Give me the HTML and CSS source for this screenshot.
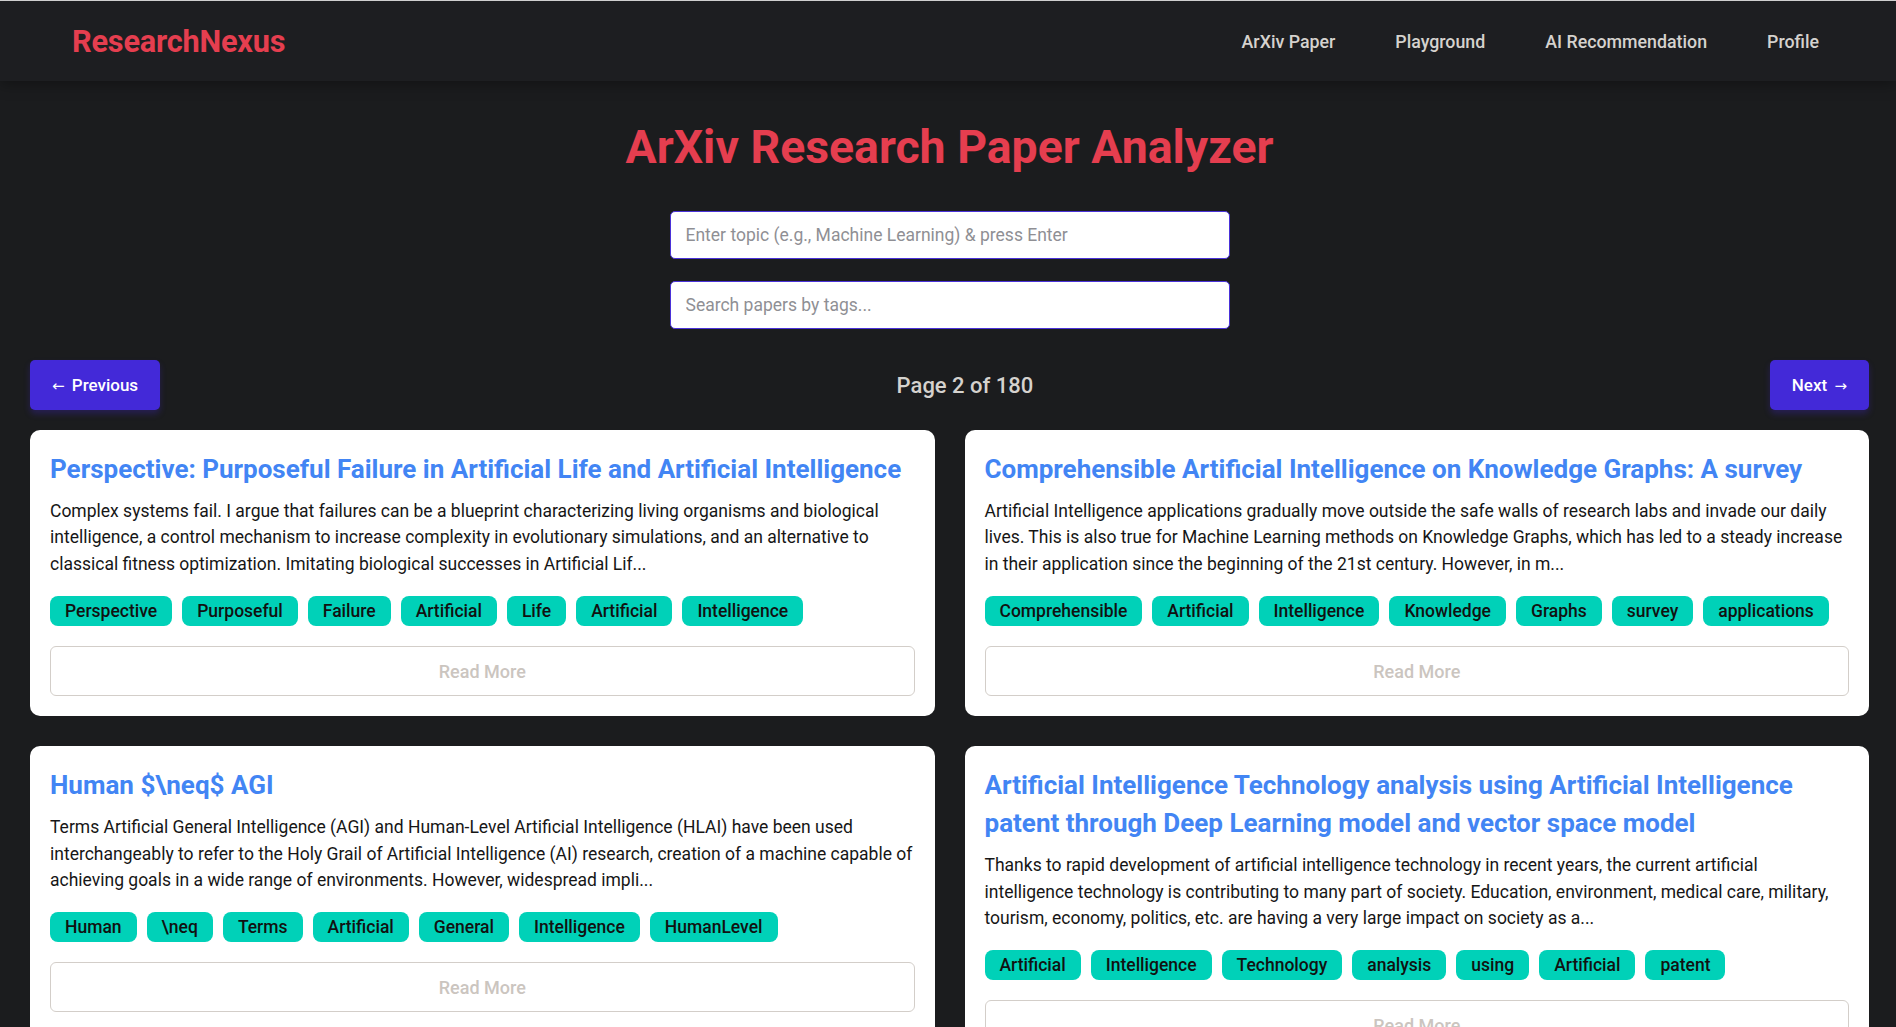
FILE: index.html
```html
<!DOCTYPE html>
<html lang="en">
<head>
<meta charset="utf-8">
<title>ResearchNexus</title>
<link rel="stylesheet" href="styles.css">
</head>
<body>
<nav class="navbar">
  <a class="brand" href="#">ResearchNexus</a>
  <div class="nav-links">
    <a href="#">ArXiv Paper</a>
    <a href="#">Playground</a>
    <a href="#">AI Recommendation</a>
    <a href="#">Profile</a>
  </div>
</nav>

<main class="page">
  <h1 class="page-title">ArXiv Research Paper Analyzer</h1>

  <div class="search">
    <input class="search-input" type="text" placeholder="Enter topic (e.g., Machine Learning) &amp; press Enter">
    <input class="search-input" type="text" placeholder="Search papers by tags...">
  </div>

  <div class="pagination">
    <button class="pager-btn"><span class="arrow arrow-left">&larr;</span> Previous</button>
    <span class="page-info">Page 2 of 180</span>
    <button class="pager-btn">Next <span class="arrow arrow-right">&rarr;</span></button>
  </div>

  <section class="grid">
    <article class="card">
      <h2 class="card-title">Perspective: Purposeful Failure in Artificial Life and Artificial Intelligence</h2>
      <p class="card-text">Complex systems fail. I argue that failures can be a blueprint characterizing living organisms and biological intelligence, a control mechanism to increase complexity in evolutionary simulations, and an alternative to classical fitness optimization. Imitating biological successes in Artificial Lif...</p>
      <div class="tags">
        <span class="tag">Perspective</span><span class="tag">Purposeful</span><span class="tag">Failure</span><span class="tag">Artificial</span><span class="tag">Life</span><span class="tag">Artificial</span><span class="tag">Intelligence</span>
      </div>
      <button class="read-more">Read More</button>
    </article>

    <article class="card">
      <h2 class="card-title">Comprehensible Artificial Intelligence on Knowledge Graphs: A survey</h2>
      <p class="card-text">Artificial Intelligence applications gradually move outside the safe walls of research labs and invade our daily lives. This is also true for Machine Learning methods on Knowledge Graphs, which has led to a steady increase in their application since the beginning of the 21st century. However, in m...</p>
      <div class="tags">
        <span class="tag">Comprehensible</span><span class="tag">Artificial</span><span class="tag">Intelligence</span><span class="tag">Knowledge</span><span class="tag">Graphs</span><span class="tag">survey</span><span class="tag">applications</span>
      </div>
      <button class="read-more">Read More</button>
    </article>

    <article class="card">
      <h2 class="card-title">Human $\neq$ AGI</h2>
      <p class="card-text">Terms Artificial General Intelligence (AGI) and Human-Level Artificial Intelligence (HLAI) have been used interchangeably to refer to the Holy Grail of Artificial Intelligence (AI) research, creation of a machine capable of achieving goals in a wide range of environments. However, widespread impli...</p>
      <div class="tags">
        <span class="tag">Human</span><span class="tag">\neq</span><span class="tag">Terms</span><span class="tag">Artificial</span><span class="tag">General</span><span class="tag">Intelligence</span><span class="tag">HumanLevel</span>
      </div>
      <button class="read-more">Read More</button>
    </article>

    <article class="card">
      <h2 class="card-title">Artificial Intelligence Technology analysis using Artificial Intelligence patent through Deep Learning model and vector space model</h2>
      <p class="card-text">Thanks to rapid development of artificial intelligence technology in recent years, the current artificial intelligence technology is contributing to many part of society. Education, environment, medical care, military, tourism, economy, politics, etc. are having a very large impact on society as a...</p>
      <div class="tags">
        <span class="tag">Artificial</span><span class="tag">Intelligence</span><span class="tag">Technology</span><span class="tag">analysis</span><span class="tag">using</span><span class="tag">Artificial</span><span class="tag">patent</span>
      </div>
      <button class="read-more">Read More</button>
    </article>
  </section>
</main>
</body>
</html>
```
FILE: styles.css
```css
* { box-sizing: border-box; }

html, body {
  margin: 0;
  padding: 0;
}

body {
  background: #1b1c1e;
  font-family: Roboto, "Liberation Sans", sans-serif;
  color: #d5d2ce;
  border-top: 1px solid #cfcfcf;
}

/* ---------- Navbar ---------- */
.navbar {
  height: 80px;
  background: #1d1e21;
  display: flex;
  align-items: center;
  justify-content: space-between;
  padding: 0 77px 0 72px;
  box-shadow: 0 3px 14px rgba(0, 0, 0, 0.35);
  position: relative;
}

.brand {
  color: #e53e4f;
  font-size: 30.7px;
  font-weight: 700;
  text-decoration: none;
  letter-spacing: -0.2px;
}

.nav-links {
  display: flex;
  gap: 60px;
}

.nav-links a {
  color: #d5d2ce;
  text-decoration: none;
  font-size: 17.8px;
  font-weight: 500;
}

/* ---------- Page ---------- */
.page {
  padding: 0 27px 40px 30px;
}

.page-title {
  margin: 39px 0 36px;
  text-align: center;
  color: #e53e4f;
  font-size: 46.4px;
  line-height: 55px;
  font-weight: 700;
}

.search {
  display: flex;
  flex-direction: column;
  align-items: center;
  gap: 22px;
}

.search-input {
  width: 560px;
  height: 48px;
  padding: 0 15px;
  border: 1px solid #4a32d8;
  border-radius: 5px;
  background: #fff;
  font-family: Roboto, "Liberation Sans", sans-serif;
  font-size: 17.5px;
  color: #222;
  outline: none;
}

.search-input::placeholder {
  color: #8f8f94;
}

.pagination {
  display: flex;
  align-items: center;
  justify-content: space-between;
  margin-top: 31px;
}

.pager-btn {
  height: 50px;
  padding: 0 22px;
  border: none;
  border-radius: 5px;
  background: #4329d8;
  color: #fff;
  font-family: Roboto, "Liberation Sans", sans-serif;
  font-size: 17px;
  font-weight: 500;
  box-shadow: 0 4px 6px rgba(67, 41, 216, 0.28);
  cursor: pointer;
}

.arrow {
  font-family: "DejaVu Sans", sans-serif;
  font-weight: 400;
  font-size: 15px;
}

.arrow-left { margin-right: 3px; }
.arrow-right { margin-left: 3px; }

.page-info {
  color: #d5d2ce;
  font-size: 22px;
  font-weight: 500;
}

/* ---------- Cards ---------- */
.grid {
  margin-top: 20px;
  display: grid;
  grid-template-columns: 1fr 1fr;
  gap: 30px;
}

.card {
  background: #fff;
  border-radius: 10px;
  padding: 20px;
}

.card-title {
  margin: 0 0 10px;
  color: #4285f4;
  font-size: 26px;
  line-height: 38px;
  font-weight: 700;
}

.card-text {
  margin: 0 0 19px;
  color: #161616;
  font-size: 17.5px;
  line-height: 26.4px;
}

.tags {
  display: flex;
  flex-wrap: wrap;
  gap: 10px;
}

.tag {
  display: inline-flex;
  align-items: center;
  height: 30px;
  padding: 0 15px;
  border-radius: 8px;
  background: #00d1b8;
  color: #111;
  font-size: 17.5px;
  font-weight: 500;
}

.read-more {
  display: block;
  width: 100%;
  height: 50px;
  margin-top: 20px;
  background: #fff;
  border: 1px solid #d3cec9;
  border-radius: 6px;
  color: #cbc5bf;
  font-family: Roboto, "Liberation Sans", sans-serif;
  font-size: 18px;
  font-weight: 500;
  cursor: pointer;
}
```
